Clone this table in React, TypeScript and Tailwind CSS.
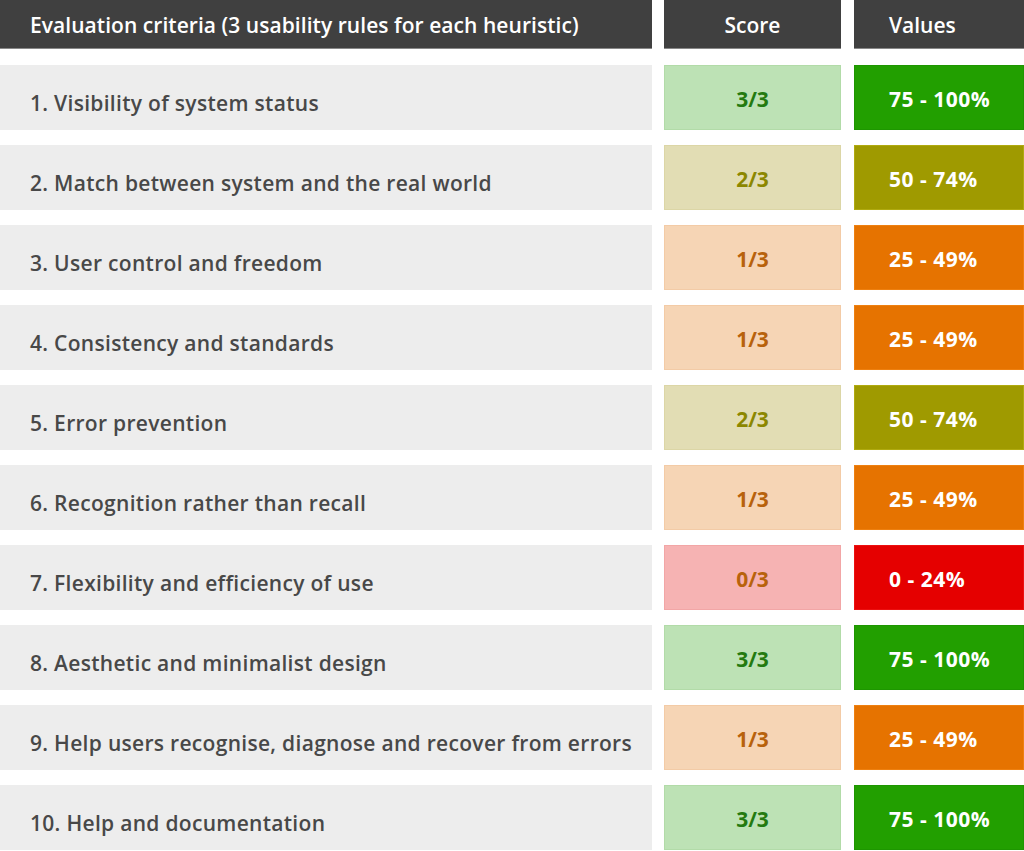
import React from "react";

type Level = "high" | "mid" | "low" | "none";

const rows: { label: string; score: string; level: Level }[] = [
  { label: "1. Visibility of system status", score: "3/3", level: "high" },
  { label: "2. Match between system and the real world", score: "2/3", level: "mid" },
  { label: "3. User control and freedom", score: "1/3", level: "low" },
  { label: "4. Consistency and standards", score: "1/3", level: "low" },
  { label: "5. Error prevention", score: "2/3", level: "mid" },
  { label: "6. Recognition rather than recall", score: "1/3", level: "low" },
  { label: "7. Flexibility and efficiency of use", score: "0/3", level: "none" },
  { label: "8. Aesthetic and minimalist design", score: "3/3", level: "high" },
  { label: "9. Help users recognise, diagnose and recover from errors", score: "1/3", level: "low" },
  { label: "10. Help and documentation", score: "3/3", level: "high" },
];

const scoreStyle: Record<Level, string> = {
  high: "bg-[#bde2b5] border-[#b2dba8] text-[#247a10]",
  mid: "bg-[#e2ddb4] border-[#dcd6a6] text-[#8c8700]",
  low: "bg-[#f6d5b5] border-[#f3cba6] text-[#b8620c]",
  none: "bg-[#f6b3b3] border-[#f2a6a6] text-[#b8620c]",
};

const valueStyle: Record<Level, { cls: string; text: string }> = {
  high: { cls: "bg-[#229f00] border-[#1e9600]", text: "75 - 100%" },
  mid: { cls: "bg-[#9f9a00] border-[#b0aa10]", text: "50 - 74%" },
  low: { cls: "bg-[#e67300] border-[#ee8010]", text: "25 - 49%" },
  none: { cls: "bg-[#e50000] border-[#ec1010]", text: "0 - 24%" },
};

export default function App() {
  return (
    <div className="w-[1024px] h-[851px] bg-white overflow-hidden font-['Open_Sans','Liberation_Sans',sans-serif]">
      <div className="flex h-[49px] gap-[12px] text-white text-[21px] font-semibold">
        <div className="w-[652px] bg-[#404040] border-b border-[#888] flex items-center pl-[30px] pt-[3px] whitespace-nowrap tracking-[0.05px]">
          Evaluation criteria (3 usability rules for each heuristic)
        </div>
        <div className="w-[177px] bg-[#404040] border-b border-[#888] flex items-center justify-center pt-[3px]">
          Score
        </div>
        <div className="flex-1 ml-[1px] bg-[#404040] border-b border-[#888] flex items-center pl-[35px] pt-[3px]">
          Values
        </div>
      </div>
      <div className="flex flex-col gap-[15px] mt-[16px]">
        {rows.map((r) => (
          <div key={r.label} className="flex h-[65px] gap-[12px]">
            <div className="w-[652px] bg-[#ededed] flex items-center pl-[30px] pt-[13px] text-[21px] tracking-[0.3px] font-semibold text-[#484848] whitespace-nowrap">
              {r.label}
            </div>
            <div
              className={`w-[177px] border flex items-center justify-center pt-[5px] text-[21px] font-bold ${scoreStyle[r.level]}`}
            >
              {r.score}
            </div>
            <div
              className={`flex-1 ml-[1px] border flex items-center pl-[34px] pt-[5px] text-[21px] tracking-[0.5px] font-bold text-white ${valueStyle[r.level].cls}`}
            >
              {valueStyle[r.level].text}
            </div>
          </div>
        ))}
      </div>
    </div>
  );
}
